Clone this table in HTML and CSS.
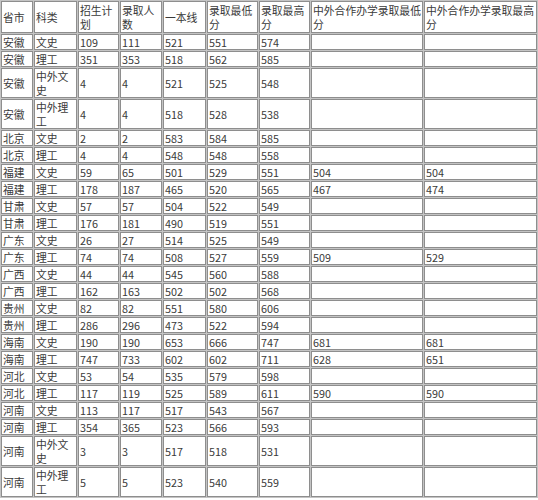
FILE: index.html
```html
<!DOCTYPE html>
<html lang="zh-CN">
<head>
<meta charset="utf-8">
<title>录取分数</title>
<link rel="stylesheet" href="styles.css">
</head>
<body>
<table class="score-table">
<colgroup>
<col class="c1"><col class="c2"><col class="c3"><col class="c4"><col class="c5"><col class="c6"><col class="c7"><col class="c8"><col class="c9">
</colgroup>
<thead>
<tr><th>省市</th><th>科类</th><th>招生计划</th><th>录取人数</th><th>一本线</th><th>录取最低分</th><th>录取最高分</th><th>中外合作办学录取最低分</th><th>中外合作办学录取最高分</th></tr>
</thead>
<tbody>
<tr><td>安徽</td><td>文史</td><td>109</td><td>111</td><td>521</td><td>551</td><td>574</td><td></td><td></td></tr>
<tr><td>安徽</td><td>理工</td><td>351</td><td>353</td><td>518</td><td>562</td><td>585</td><td></td><td></td></tr>
<tr><td>安徽</td><td>中外文史</td><td>4</td><td>4</td><td>521</td><td>525</td><td>548</td><td></td><td></td></tr>
<tr><td>安徽</td><td>中外理工</td><td>4</td><td>4</td><td>518</td><td>528</td><td>538</td><td></td><td></td></tr>
<tr><td>北京</td><td>文史</td><td>2</td><td>2</td><td>583</td><td>584</td><td>585</td><td></td><td></td></tr>
<tr><td>北京</td><td>理工</td><td>4</td><td>4</td><td>548</td><td>548</td><td>558</td><td></td><td></td></tr>
<tr><td>福建</td><td>文史</td><td>59</td><td>65</td><td>501</td><td>529</td><td>551</td><td>504</td><td>504</td></tr>
<tr><td>福建</td><td>理工</td><td>178</td><td>187</td><td>465</td><td>520</td><td>565</td><td>467</td><td>474</td></tr>
<tr><td>甘肃</td><td>文史</td><td>57</td><td>57</td><td>504</td><td>522</td><td>549</td><td></td><td></td></tr>
<tr><td>甘肃</td><td>理工</td><td>176</td><td>181</td><td>490</td><td>519</td><td>551</td><td></td><td></td></tr>
<tr><td>广东</td><td>文史</td><td>26</td><td>27</td><td>514</td><td>525</td><td>549</td><td></td><td></td></tr>
<tr><td>广东</td><td>理工</td><td>74</td><td>74</td><td>508</td><td>527</td><td>559</td><td>509</td><td>529</td></tr>
<tr><td>广西</td><td>文史</td><td>44</td><td>44</td><td>545</td><td>560</td><td>588</td><td></td><td></td></tr>
<tr><td>广西</td><td>理工</td><td>162</td><td>163</td><td>502</td><td>502</td><td>568</td><td></td><td></td></tr>
<tr><td>贵州</td><td>文史</td><td>82</td><td>82</td><td>551</td><td>580</td><td>606</td><td></td><td></td></tr>
<tr><td>贵州</td><td>理工</td><td>286</td><td>296</td><td>473</td><td>522</td><td>594</td><td></td><td></td></tr>
<tr><td>海南</td><td>文史</td><td>190</td><td>190</td><td>653</td><td>666</td><td>747</td><td>681</td><td>681</td></tr>
<tr><td>海南</td><td>理工</td><td>747</td><td>733</td><td>602</td><td>602</td><td>711</td><td>628</td><td>651</td></tr>
<tr><td>河北</td><td>文史</td><td>53</td><td>54</td><td>535</td><td>579</td><td>598</td><td></td><td></td></tr>
<tr><td>河北</td><td>理工</td><td>117</td><td>119</td><td>525</td><td>589</td><td>611</td><td>590</td><td>590</td></tr>
<tr><td>河南</td><td>文史</td><td>113</td><td>117</td><td>517</td><td>543</td><td>567</td><td></td><td></td></tr>
<tr><td>河南</td><td>理工</td><td>354</td><td>365</td><td>523</td><td>566</td><td>593</td><td></td><td></td></tr>
<tr><td>河南</td><td>中外文史</td><td>3</td><td>3</td><td>517</td><td>518</td><td>531</td><td></td><td></td></tr>
<tr><td>河南</td><td>中外理工</td><td>5</td><td>5</td><td>523</td><td>540</td><td>559</td><td></td><td></td></tr>
</tbody>
</table>
</body>
</html>
```

FILE: styles.css
```css
html, body {
  margin: 0;
  padding: 0;
  background: #ffffff;
}

.score-table {
  table-layout: fixed;
  width: 538px;
  border-collapse: separate;
  border-spacing: 1px;
  background: #c4c4c4;
  font-family: "Noto Sans CJK SC", "Microsoft YaHei", sans-serif;
  font-size: 10.8px;
  line-height: 14px;
  color: #3a3a3a;
}

.c1 { width: 32px; }
.c2 { width: 43px; }
.c3 { width: 41px; }
.c4 { width: 42px; }
.c5 { width: 43px; }
.c6 { width: 51px; }
.c7 { width: 51px; }
.c8 { width: 112px; }
.c9 { width: 113px; }

.score-table th,
.score-table td {
  background: #ffffff;
  border: 1px solid #8e8e8e;
  padding: 0 0 0 1px;
  text-align: left;
  vertical-align: middle;
  font-weight: normal;
  overflow: hidden;
}

.score-table th {
  padding-top: 1px;
  padding-bottom: 1px;
}
```
